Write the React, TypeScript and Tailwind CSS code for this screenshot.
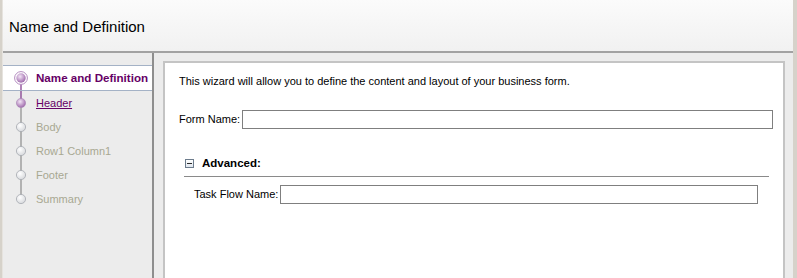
import React from "react";

type Step = {
    label: string;
    state: "current" | "visited" | "todo";
};

const steps: Step[] = [
    { label: "Name and Definition", state: "current" },
    { label: "Header", state: "visited" },
    { label: "Body", state: "todo" },
    { label: "Row1 Column1", state: "todo" },
    { label: "Footer", state: "todo" },
    { label: "Summary", state: "todo" },
];

const StepDot: React.FC<{ step: Step; first: boolean; last: boolean; prevPurple: boolean }> = ({
    step,
    first,
    last,
    prevPurple,
}) => {
    const nextPurple = step.state === "current";
    return (
        <svg width="24" height="24" viewBox="0 0 24 24" className="shrink-0">
            <defs>
                <radialGradient id="gPurple" cx="0.4" cy="0.35" r="0.7">
                    <stop offset="0" stopColor="#f3e6f6" />
                    <stop offset="1" stopColor="#9a62a8" />
                </radialGradient>
                <radialGradient id="gGray" cx="0.4" cy="0.35" r="0.7">
                    <stop offset="0" stopColor="#ffffff" />
                    <stop offset="1" stopColor="#d4d6da" />
                </radialGradient>
            </defs>
            {!first && (
                <line x1="12" y1="0" x2="12" y2="12" stroke={prevPurple ? "#7b2f86" : "#8c8c8c"} strokeWidth="1.2" />
            )}
            {!last && (
                <line x1="12" y1="12" x2="12" y2="24" stroke={nextPurple ? "#7b2f86" : "#8c8c8c"} strokeWidth="1.2" />
            )}
            {step.state === "current" && (
                <>
                    <circle cx="12" cy="12" r="6.4" fill="#ffffff" stroke="#b48cc0" strokeWidth="1" />
                    <circle cx="12" cy="12" r="4.7" fill="url(#gPurple)" />
                </>
            )}
            {step.state === "visited" && <circle cx="12" cy="12" r="4.6" fill="url(#gPurple)" stroke="#a884b4" strokeWidth="0.6" />}
            {step.state === "todo" && <circle cx="12" cy="12" r="4.6" fill="url(#gGray)" stroke="#a6a9b0" strokeWidth="0.8" />}
        </svg>
    );
};

const App: React.FC = () => {
    return (
        <div
            className="w-[797px] h-[278px] overflow-hidden flex bg-[#ececec] text-[11px] text-black"
            style={{ fontFamily: "'Liberation Sans', Arial, sans-serif" }}
        >
            <div className="w-[3px] bg-[#d6d2ca] border-r border-[#e6e3de]" />
            <div className="flex-1 flex flex-col">
                {/* page title */}
                <div className="h-[53px] bg-gradient-to-b from-[#fbfbfb] to-[#f1f1f1] border-b-2 border-[#a2a2a2] flex items-center pl-[6px] pt-[3px]">
                    <span className="text-[15px]">Name and Definition</span>
                </div>
                <div className="flex-1 flex">
                    {/* train */}
                    <div className="w-[151px] shrink-0 border-r-2 border-[#8e8e8e] pt-[12px]">
                        {steps.map((s, i) => (
                            <div
                                key={s.label}
                                className={
                                    s.state === "current"
                                        ? "h-[26px] flex items-center bg-white border-y border-[#a4b2c6] pl-[6px]"
                                        : "h-[24px] flex items-center pl-[6px]"
                                }
                            >
                                <StepDot
                                    step={s}
                                    first={i === 0}
                                    last={i === steps.length - 1}
                                    prevPurple={i > 0 && steps[i - 1].state === "current"}
                                />
                                <span
                                    className={
                                        s.state === "current"
                                            ? "ml-[3px] font-bold text-[11.6px] text-[#660066]"
                                            : s.state === "visited"
                                              ? "ml-[3px] text-[#660066] underline"
                                              : "ml-[3px] text-[#a8a892]"
                                    }
                                >
                                    {s.label}
                                </span>
                            </div>
                        ))}
                    </div>
                    {/* content */}
                    <div className="flex-1 pl-[9px] pt-[8px] pr-[8px]">
                        <div className="h-full bg-white border-l-2 border-t-2 border-r-2 border-[#c4c4c4] pl-[14px] pr-[10px] pt-[10px]">
                            <div className="h-[16px] leading-[16px]">
                                This wizard will allow you to define the content and layout of your business form.
                            </div>
                            <div className="flex items-center mt-[21px] gap-[2px]">
                                <span>Form Name:</span>
                                <div className="flex-1 h-[19px] border border-[#7f7f7f] bg-white" />
                            </div>
                            <div className="mt-[24px] ml-[5px] mr-[4px] border-b border-[#8a8a8a] h-[24px] flex items-center gap-[8px] pl-[1px] pb-[2px]">
                                <div className="w-[9px] h-[9px] border border-[#6d7c8c] bg-gradient-to-b from-white to-[#dfe6ee] flex items-center justify-center">
                                    <div className="w-[5px] h-px bg-[#2a2a2a]" />
                                </div>
                                <span className="font-bold text-[11.5px]">Advanced:</span>
                            </div>
                            <div className="flex items-center mt-[8px] ml-[15px] mr-[15px] gap-[2px]">
                                <span>Task Flow Name:</span>
                                <div className="flex-1 h-[19px] border border-[#7f7f7f] bg-white" />
                            </div>
                        </div>
                    </div>
                </div>
            </div>
            <div className="w-[4px] bg-[#d6d2ca]" />
        </div>
    );
};

export default App;
